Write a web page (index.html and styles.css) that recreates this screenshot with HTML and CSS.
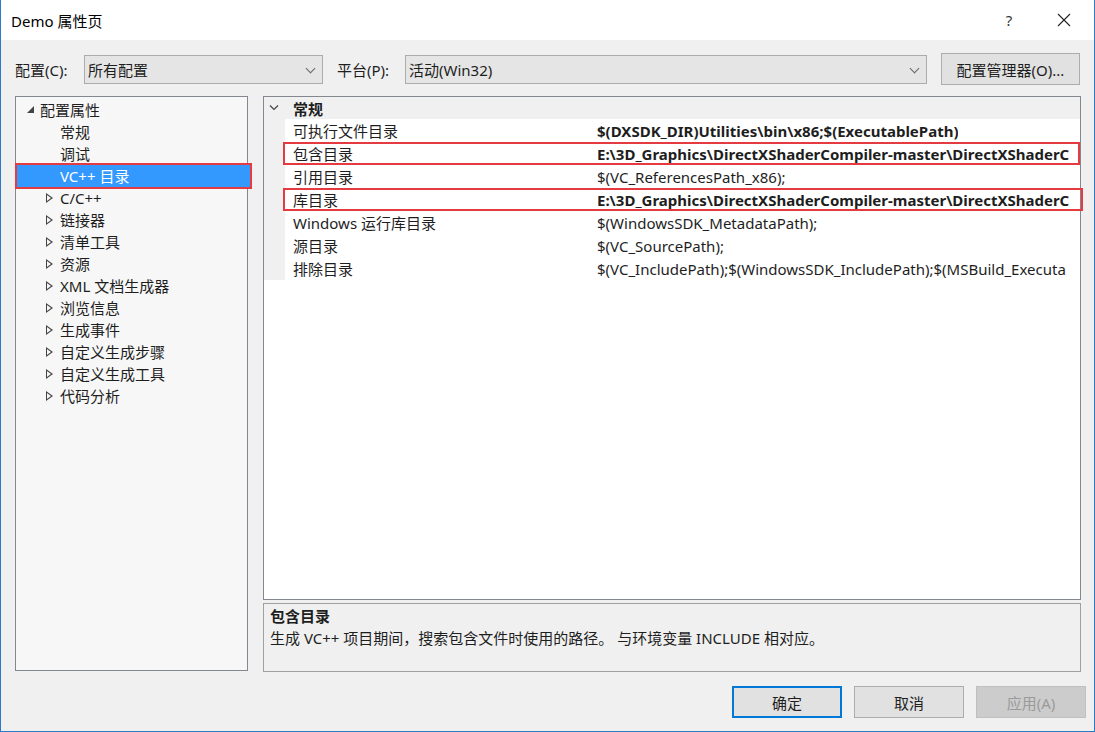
FILE: index.html
```html
<!DOCTYPE html>
<html lang="zh-CN">
<head>
    <meta charset="UTF-8">
    <title>Demo 属性页</title>
    <link rel="stylesheet" href="styles.css">
</head>
<body>
    <div class="window">
        <div class="titlebar">
            <span class="title">Demo 属性页</span>
            <span class="help">?</span>
            <span class="close">
                <svg width="14" height="14" viewBox="0 0 14 14"><path d="M1 1 L13 13 M13 1 L1 13" stroke="#222" stroke-width="1.1"/></svg>
            </span>
        </div>

        <div class="toolbar">
            <label>配置(C):</label>
            <div class="combo combo-config">所有配置<span class="arrow"></span></div>
            <label class="platform-label">平台(P):</label>
            <div class="combo combo-platform">活动(Win32)<span class="arrow"></span></div>
            <button class="btn btn-manager">配置管理器(O)...</button>
        </div>

        <div class="main">
            <div class="tree">
                <div class="node root"><span class="tri open"></span>配置属性</div>
                <div class="node leaf">常规</div>
                <div class="node leaf">调试</div>
                <div class="node leaf selected">VC++ 目录</div>
                <div class="node child"><span class="tri"></span>C/C++</div>
                <div class="node child"><span class="tri"></span>链接器</div>
                <div class="node child"><span class="tri"></span>清单工具</div>
                <div class="node child"><span class="tri"></span>资源</div>
                <div class="node child"><span class="tri"></span>XML 文档生成器</div>
                <div class="node child"><span class="tri"></span>浏览信息</div>
                <div class="node child"><span class="tri"></span>生成事件</div>
                <div class="node child"><span class="tri"></span>自定义生成步骤</div>
                <div class="node child"><span class="tri"></span>自定义生成工具</div>
                <div class="node child"><span class="tri"></span>代码分析</div>
            </div>

            <div class="right">
                <div class="grid">
                    <div class="group">
                        <svg class="chev" width="10" height="6" viewBox="0 0 10 6"><path d="M1 0.5 L5 4.5 L9 0.5" fill="none" stroke="#444" stroke-width="1.2"/></svg>
                        <span>常规</span>
                    </div>
                    <div class="prop"><span class="name">可执行文件目录</span><span class="value bold">$(DXSDK_DIR)Utilities\bin\x86;$(ExecutablePath)</span></div>
                    <div class="prop marked"><span class="name">包含目录</span><span class="value bold">E:\3D_Graphics\DirectXShaderCompiler-master\DirectXShaderC</span></div>
                    <div class="prop"><span class="name">引用目录</span><span class="value">$(VC_ReferencesPath_x86);</span></div>
                    <div class="prop marked wide"><span class="name">库目录</span><span class="value bold">E:\3D_Graphics\DirectXShaderCompiler-master\DirectXShaderC</span></div>
                    <div class="prop"><span class="name">Windows 运行库目录</span><span class="value">$(WindowsSDK_MetadataPath);</span></div>
                    <div class="prop"><span class="name">源目录</span><span class="value">$(VC_SourcePath);</span></div>
                    <div class="prop"><span class="name">排除目录</span><span class="value">$(VC_IncludePath);$(WindowsSDK_IncludePath);$(MSBuild_Executa</span></div>
                </div>
                <div class="desc">
                    <div class="desc-title">包含目录</div>
                    <div class="desc-text">生成 VC++ 项目期间，搜索包含文件时使用的路径。 与环境变量 INCLUDE 相对应。</div>
                </div>
            </div>
        </div>

        <div class="footer">
            <button class="btn btn-ok">确定</button>
            <button class="btn">取消</button>
            <button class="btn disabled">应用(A)</button>
        </div>
    </div>
</body>
</html>
```
FILE: styles.css
```css
* {
    box-sizing: border-box;
}
html, body {
    margin: 0;
    padding: 0;
}
body {
    font-family: "Noto Sans", "Noto Sans CJK SC", sans-serif;
    font-size: 15px;
    color: #1e1e1e;
}
.window {
    width: 1095px;
    height: 732px;
    background: #f0f0f0;
    border: 1px solid #2b79c9;
    border-top: none;
    display: flex;
    flex-direction: column;
}
.titlebar {
    height: 40px;
    background: #fff;
    display: flex;
    align-items: center;
    padding-left: 10px;
}
.title {
    flex: 1;
    font-size: 15px;
    color: #000;
}
.help {
    width: 20px;
    text-align: center;
    margin-right: 38px;
    font-size: 15px;
    color: #333;
}
.close {
    width: 16px;
    margin-right: 21px;
    display: flex;
}

.toolbar {
    height: 56px;
    display: flex;
    align-items: center;
    padding-left: 14px;
    padding-top: 2px;
}
.toolbar label {
    width: 69px;
}
.toolbar .platform-label {
    width: 68px;
    margin-left: 14px;
}
.combo {
    height: 29px;
    background: #e5e5e5;
    border: 1px solid #acacac;
    display: flex;
    align-items: center;
    padding-left: 3px;
    position: relative;
}
.combo-config {
    width: 239px;
}
.combo-platform {
    width: 522px;
}
.arrow {
    position: absolute;
    right: 8px;
    top: 9px;
    width: 7px;
    height: 7px;
    border-right: 1px solid #666;
    border-bottom: 1px solid #666;
    transform: rotate(45deg);
}
.btn {
    height: 32px;
    width: 110px;
    background: #e1e1e1;
    border: 1px solid #adadad;
    font: inherit;
    color: #1e1e1e;
    padding: 0;
}
.btn-manager {
    width: 139px;
    margin-left: 14px;
}

.main {
    display: flex;
    padding: 0 0 0 14px;
    gap: 15px;
}
.tree {
    width: 233px;
    height: 575px;
    background: #f7f7f7;
    border: 1px solid #828790;
    padding-top: 2px;
}
.node {
    height: 22px;
    line-height: 22px;
    display: flex;
    align-items: center;
    white-space: nowrap;
}
.root {
    padding-left: 8px;
}
.leaf {
    padding-left: 44px;
}
.child {
    padding-left: 28px;
}
.selected {
    background: #3399ff;
    color: #fff;
    box-shadow: 0 0 0 2px #e53a40;
    width: 233px;
    margin-left: 1px;
    padding-left: 43px;
}
.tri {
    width: 16px;
    height: 10px;
    position: relative;
}
.tri::before {
    content: "";
    position: absolute;
    left: 2px;
    top: 0;
    border-left: 7px solid #444;
    border-top: 5px solid transparent;
    border-bottom: 5px solid transparent;
}
.child .tri::after {
    content: "";
    position: absolute;
    left: 3px;
    top: 2px;
    border-left: 4px solid #f7f7f7;
    border-top: 3px solid transparent;
    border-bottom: 3px solid transparent;
}
.tri.open::before {
    left: 3px;
    top: 1px;
    border-top: none;
    border-bottom: 7px solid #444;
    border-left: 7px solid transparent;
}

.right {
    width: 818px;
    flex: none;
    display: flex;
    flex-direction: column;
    gap: 3px;
}
.grid {
    height: 504px;
    background: #fff;
    border: 1px solid #828790;
}
.group {
    height: 22px;
    background: #f0f0f0;
    display: flex;
    align-items: center;
    font-weight: bold;
    padding-left: 5px;
}
.chev {
    margin-right: 14px;
}
.prop {
    height: 23px;
    display: flex;
    align-items: center;
    white-space: nowrap;
    border-left: 21px solid #f0f0f0;
    position: relative;
}
.name {
    width: 312px;
    padding-left: 8px;
    flex-shrink: 0;
}
.value {
    overflow: hidden;
}
.bold {
    font-weight: bold;
}
.marked::after {
    content: "";
    position: absolute;
    left: -2px;
    right: 0;
    top: 0;
    bottom: 0;
    border: 2px solid #e53a40;
}
.marked.wide::after {
    right: -3px;
}
.desc {
    height: 69px;
    border: 1px solid #a0a0a0;
    padding: 1px 6px;
    line-height: 22px;
}
.desc-title {
    font-weight: bold;
}

.footer {
    flex: 1;
    display: flex;
    justify-content: flex-end;
    align-items: flex-start;
    gap: 12px;
    padding: 14px 8px 0 0;
}
.btn-ok {
    border: 2px solid #0078d7;
}
.disabled {
    background: #cccccc;
    border-color: #bfbfbf;
    color: #9a9a9a;
}
```
